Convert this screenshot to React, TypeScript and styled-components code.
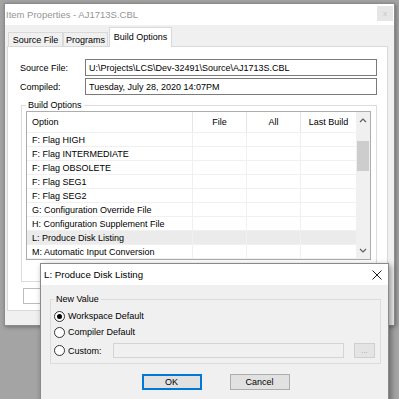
import React from 'react';
import styled, { createGlobalStyle } from 'styled-components';

const GlobalStyle = createGlobalStyle`
  html, body { margin: 0; padding: 0; background: #a4a4a4; }
  body { font-family: "Liberation Sans", Arial, sans-serif; font-size: 9px; color: #000; }
  * { box-sizing: border-box; }
`;

const Desktop = styled.div`
  position: relative;
  width: 399px;
  height: 399px;
  overflow: hidden;
  background: #a4a4a4;
  padding: 3px 0 0 4px;
`;

const Window = styled.div`
  width: 391px;
  height: 323px;
  background: #f0f0f0;
  border: 1px solid #8c8c8c;
  box-shadow: 1px 1px 4px rgba(0, 0, 0, 0.35);
  display: flex;
  flex-direction: column;
`;

const TitleBar = styled.div<{ $active?: boolean }>`
  height: 21px;
  flex: none;
  background: #fff;
  display: flex;
  align-items: center;
  justify-content: space-between;
  padding: 0 ${p => (p.$active ? 6 : 1)}px 0 ${p => (p.$active ? 3 : 1)}px;
`;

const TitleText = styled.span<{ $active?: boolean }>`
  font-size: ${p => (p.$active ? 9.7 : 9.5)}px;
  color: ${p => (p.$active ? '#000' : '#959595')};
`;

const CloseBox = styled.div`
  width: 16px;
  height: 15px;
  align-self: flex-start;
  margin-top: 2px;
  background: #e6e6e6;
  color: #c8c8c8;
  font-size: 8px;
  display: flex;
  align-items: center;
  justify-content: center;
`;

const WindowBody = styled.div`
  flex: 1;
  display: flex;
  flex-direction: column;
  padding: 3px 6px 0 2px;
`;

const TabRow = styled.div`
  display: flex;
  align-items: flex-end;
  height: 19px;
  padding-left: 1px;
  margin-bottom: -1px;
  position: relative;
  z-index: 1;
`;

const Tab = styled.div<{ $selected?: boolean; $w: number }>`
  width: ${p => p.$w}px;
  height: ${p => (p.$selected ? 20 : 15)}px;
  background: ${p => (p.$selected ? '#fff' : '#f0f0f0')};
  border: 1px solid #d9d9d9;
  border-bottom: ${p => (p.$selected ? 'none' : '1px solid #d9d9d9')};
  margin-left: ${p => (p.$selected ? 1 : 0)}px;
  display: flex;
  align-items: center;
  justify-content: center;
  padding-bottom: ${p => (p.$selected ? 2 : 0)}px;
`;

const Panel = styled.div`
  width: 381px;
  height: 265px;
  background: #fff;
  border: 1px solid #d9d9d9;
  padding: 12px 10px 0 12px;
  display: flex;
  flex-direction: column;
`;

const FieldRow = styled.div`
  display: grid;
  grid-template-columns: 65px 1fr;
  align-items: center;
  height: 17px;
  & + & { margin-top: 2px; }
`;

const TextBox = styled.div<{ $disabled?: boolean }>`
  height: 100%;
  border: 1px solid ${p => (p.$disabled ? '#d4d4d4' : '#7a7a7a')};
  background: ${p => (p.$disabled ? '#f0f0f0' : '#fff')};
  padding-left: 3px;
  display: flex;
  align-items: center;
  white-space: nowrap;
  overflow: hidden;
`;

const Group = styled.fieldset<{ $w: number }>`
  margin: 0;
  width: ${p => p.$w}px;
  border: 1px solid #dcdcdc;
  min-width: 0;
`;

const BuildGroup = styled(Group)`
  margin: 5px 0 0 1px;
  padding: 0 5px 21px 4px;
`;

const Legend = styled.legend`
  padding: 0 2px;
  font-size: 9px;
  line-height: 11px;
`;

const List = styled.div`
  margin-top: 0;
  width: 345px;
  height: 149px;
  border: 1px solid #adadad;
  display: flex;
  overflow: hidden;
`;

const Table = styled.div`
  flex: 1;
  display: flex;
  flex-direction: column;
`;

const Cols = styled.div<{ $head?: boolean; $selected?: boolean }>`
  display: grid;
  grid-template-columns: 166px 54px 54px 1fr;
  height: ${p => (p.$head ? 21 : 14)}px;
  flex: none;
  background: ${p => (p.$selected ? '#ebebeb' : '#fff')};
  border-bottom: 1px solid #f0f0f0;
`;

const Cell = styled.div<{ $center?: boolean; $head?: boolean }>`
  display: flex;
  align-items: center;
  justify-content: ${p => (p.$center ? 'center' : 'flex-start')};
  padding-left: ${p => (p.$center ? 0 : 5)}px;
  padding-top: ${p => (p.$head ? 0 : 1)}px;
  border-right: 1px solid ${p => (p.$head ? '#e5e5e5' : '#f0f0f0')};
  white-space: nowrap;
  overflow: hidden;
  &:last-child { border-right: none; }
`;

const ScrollBar = styled.div`
  width: 14px;
  flex: none;
  background: #f0f0f0;
  display: flex;
  flex-direction: column;
`;

const ScrollButton = styled.div`
  height: 17px;
  display: flex;
  align-items: center;
  justify-content: center;
`;

const Thumb = styled.div`
  margin: 12px 1px 0;
  height: 30px;
  background: #cdcdcd;
`;

const Track = styled.div`
  flex: 1;
`;

const HiddenBox = styled.div`
  margin: 6px 0 0 3px;
  width: 300px;
  height: 16px;
  border: 1px solid #bcbcbc;
  background: #fff;
`;

const Dialog = styled.div`
  position: absolute;
  left: 40px;
  top: 263px;
  width: 349px;
  height: 145px;
  background: #f0f0f0;
  border: 1px solid #8a8a8a;
  box-shadow: 2px 2px 6px rgba(0, 0, 0, 0.4);
  display: flex;
  flex-direction: column;
`;

const DialogBody = styled.div`
  padding: 9px 7px 0 9px;
  display: flex;
  flex-direction: column;
`;

const ValueGroup = styled(Group)`
  padding: 0 0 5px 3px;
`;

const Options = styled.div`
  padding-top: 3px;
  display: flex;
  flex-direction: column;
`;

const RadioRow = styled.div<{ $tall?: boolean }>`
  display: flex;
  align-items: center;
  height: ${p => (p.$tall ? 15 : 16)}px;
  margin-top: ${p => (p.$tall ? 3 : 0)}px;
`;

const Radio = styled.span<{ $checked?: boolean }>`
  width: 11px;
  height: 11px;
  border-radius: 50%;
  border: 1px solid #333;
  background: #fff;
  flex: none;
  margin-right: 3px;
  display: flex;
  align-items: center;
  justify-content: center;
  &::after {
    content: '';
    width: 5px;
    height: 5px;
    border-radius: 50%;
    background: ${p => (p.$checked ? '#000' : 'transparent')};
  }
`;

const RadioLabel = styled.span<{ $w?: number }>`
  width: ${p => (p.$w ? `${p.$w}px` : 'auto')};
  flex: none;
`;

const CustomBox = styled(TextBox)`
  width: 231px;
  height: 15px;
  margin-right: 10px;
`;

const EllipsisButton = styled.div`
  width: 21px;
  height: 15px;
  background: #e4e4e4;
  border: 1px solid #cfcfcf;
  color: #a5a5a5;
  font-size: 8px;
  display: flex;
  align-items: center;
  justify-content: center;
`;

const ButtonRow = styled.div`
  display: flex;
  justify-content: center;
  gap: 28px;
  margin-top: 10px;
`;

const Button = styled.div<{ $default?: boolean }>`
  width: 60px;
  height: 16px;
  background: #e1e1e1;
  border: 1px solid ${p => (p.$default ? '#0078d7' : '#adadad')};
  box-shadow: ${p => (p.$default ? 'inset 0 0 0 1px #0078d7' : 'none')};
  display: flex;
  align-items: center;
  justify-content: center;
  font-size: 9px;
`;

const Chevron: React.FC<{ down?: boolean }> = ({ down }) => (
  <svg width="8" height="5" viewBox="0 0 8 5">
    <path
      d={down ? 'M1 1 L4 4 L7 1' : 'M1 4 L4 1 L7 4'}
      fill="none"
      stroke="#606060"
      strokeWidth="1.2"
    />
  </svg>
);

const CloseX = () => (
  <svg width="10" height="10" viewBox="0 0 10 10">
    <path d="M0.5 0.5 L9.5 9.5 M9.5 0.5 L0.5 9.5" stroke="#222" strokeWidth="1" />
  </svg>
);

const rows = [
  'F: Flag HIGH',
  'F: Flag INTERMEDIATE',
  'F: Flag OBSOLETE',
  'F: Flag SEG1',
  'F: Flag SEG2',
  'G: Configuration Override File',
  'H: Configuration Supplement File',
  'L: Produce Disk Listing',
  'M: Automatic Input Conversion',
];

const App: React.FC = () => {
  return <Desktop>
    <GlobalStyle />
    <Window>
      <TitleBar>
        <TitleText>Item Properties - AJ1713S.CBL</TitleText>
        <CloseBox>x</CloseBox>
      </TitleBar>
      <WindowBody>
        <TabRow>
          <Tab $w={55}>Source File</Tab>
          <Tab $w={45}>Programs</Tab>
          <Tab $w={63} $selected>Build Options</Tab>
        </TabRow>
        <Panel>
          <FieldRow>
            <span>Source File:</span>
            <TextBox>U:\Projects\LCS\Dev-32491\Source\AJ1713S.CBL</TextBox>
          </FieldRow>
          <FieldRow>
            <span>Compiled:</span>
            <TextBox>Tuesday, July 28, 2020 14:07PM</TextBox>
          </FieldRow>
          <BuildGroup $w={356}>
            <Legend>Build Options</Legend>
            <List>
              <Table>
                <Cols $head>
                  <Cell $head>Option</Cell>
                  <Cell $head $center>File</Cell>
                  <Cell $head $center>All</Cell>
                  <Cell $head $center>Last Build</Cell>
                </Cols>
                {rows.map(r => (
                  <Cols key={r} $selected={r.startsWith('L:')}>
                    <Cell>{r}</Cell>
                    <Cell />
                    <Cell />
                    <Cell />
                  </Cols>
                ))}
              </Table>
              <ScrollBar>
                <ScrollButton><Chevron /></ScrollButton>
                <Thumb />
                <Track />
                <ScrollButton><Chevron down /></ScrollButton>
              </ScrollBar>
            </List>
          </BuildGroup>
          <HiddenBox />
        </Panel>
      </WindowBody>
    </Window>

    <Dialog>
      <TitleBar $active>
        <TitleText $active>L: Produce Disk Listing</TitleText>
        <CloseX />
      </TitleBar>
      <DialogBody>
        <ValueGroup $w={331}>
          <Legend>New Value</Legend>
          <Options>
            <RadioRow>
              <Radio $checked />
              <RadioLabel>Workspace Default</RadioLabel>
            </RadioRow>
            <RadioRow>
              <Radio />
              <RadioLabel>Compiler Default</RadioLabel>
            </RadioRow>
            <RadioRow $tall>
              <Radio />
              <RadioLabel $w={45}>Custom:</RadioLabel>
              <CustomBox $disabled />
              <EllipsisButton>...</EllipsisButton>
            </RadioRow>
          </Options>
        </ValueGroup>
        <ButtonRow>
          <Button $default>OK</Button>
          <Button>Cancel</Button>
        </ButtonRow>
      </DialogBody>
    </Dialog>
  </Desktop>
}

export default App
